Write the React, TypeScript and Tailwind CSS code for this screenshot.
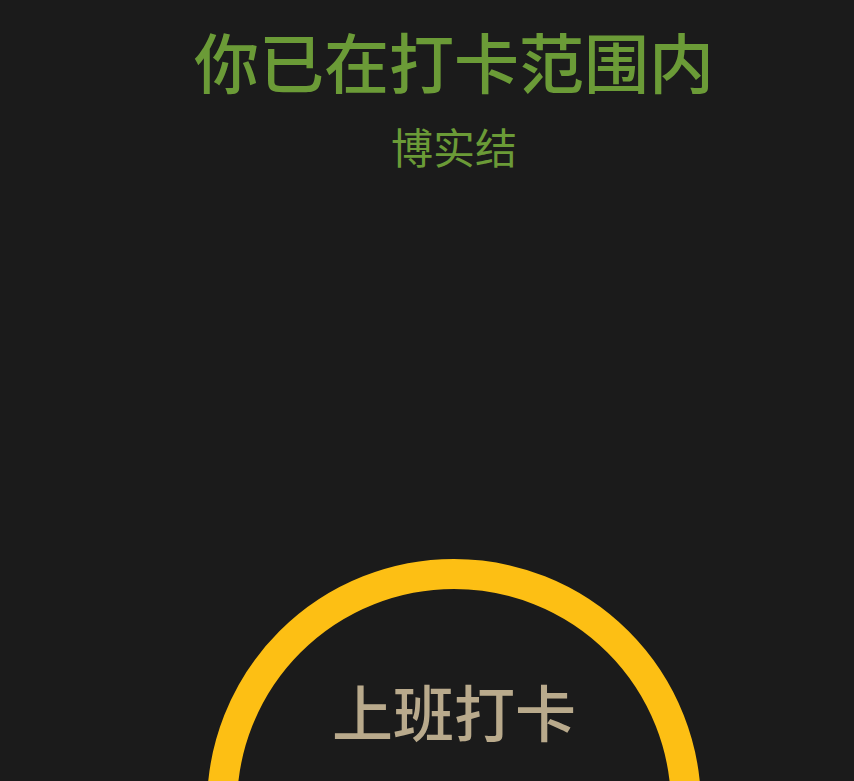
export default function App() {
  return (
    <div
      className="w-full h-[781px] overflow-hidden bg-[#1b1b1b] flex flex-col items-center pl-[54px]"
      style={{ fontFamily: '"Noto Sans CJK SC", "Noto Sans", sans-serif' }}
    >
      <h1 className="mt-[28px] text-[65px] leading-none font-medium text-[#6b9b37]">你已在打卡范围内</h1>
      <p className="mt-[32px] text-[42px] leading-none text-[#6b9b37]">博实结</p>
      <div className="mt-[392px] shrink-0 w-[494px] h-[494px] rounded-full border-[30px] border-[#fdbf14] flex justify-center">
        <span className="mt-[91px] text-[61px] leading-none font-medium text-[#b9aa8c]">上班打卡</span>
      </div>
    </div>
  );
}
